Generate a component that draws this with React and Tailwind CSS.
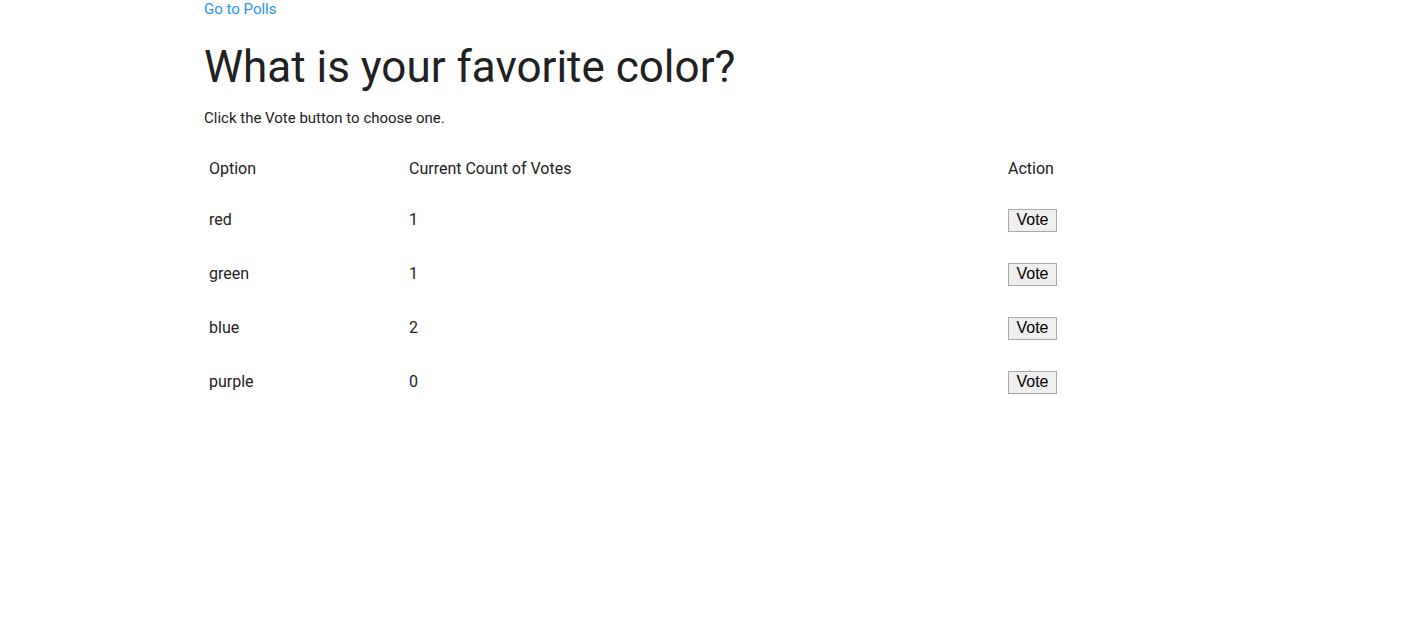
import React, { useState } from 'react';

const App = () => {
  const [options, setOptions] = useState([
    { name: 'red', votes: 1 },
    { name: 'green', votes: 1 },
    { name: 'blue', votes: 2 },
    { name: 'purple', votes: 0 },
  ]);

  // bump the count for one option
  const vote = (i) => {
    setOptions(options.map((o, j) => (j === i ? { ...o, votes: o.votes + 1 } : o)));
  };

  return (
    <div className="min-h-screen bg-white text-[#212121]" style={{ fontFamily: 'Roboto, sans-serif' }}>
      <div className="w-[1000px] mx-auto">
        <a href="#" className="block text-[15px] leading-[19px] text-[#2196f3]">Go to Polls</a>
        <h1 className="mt-[23px] text-[44px] leading-[50px] font-normal">What is your favorite color?</h1>
        <p className="mt-[17px] text-[15px] leading-[18px]">Click the Vote button to choose one.</p>
        <table className="mt-[18px] w-full text-[16px] text-left">
          <thead>
            <tr className="h-[48px]">
              <th className="w-[200px] px-[5px] font-normal">Option</th>
              <th className="w-[600px] px-[5px] font-normal">Current Count of Votes</th>
              <th className="w-[200px] px-[4px] font-normal">Action</th>
            </tr>
          </thead>
          <tbody>
            {options.map((o, i) => (
              <tr key={o.name} className="h-[54px]">
                <td className="px-[5px]">{o.name}</td>
                <td className="px-[5px]">{o.votes}</td>
                <td className="px-[4px]">
                  <button
                    onClick={() => vote(i)}
                    className="h-[23px] w-[49px] bg-[#efefef] border border-[#a9a9a9] text-[16px] leading-[20px] text-black"
                    style={{ fontFamily: '"Liberation Sans", Arial, sans-serif' }}
                  >
                    Vote
                  </button>
                </td>
              </tr>
            ))}
          </tbody>
        </table>
      </div>
    </div>
  );
};

export default App;
